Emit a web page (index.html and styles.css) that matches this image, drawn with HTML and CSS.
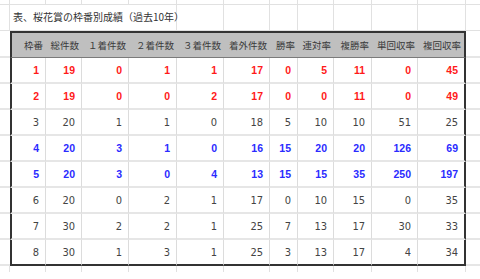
FILE: index.html
```html
<!DOCTYPE html>
<html lang="ja">
<head>
<meta charset="utf-8">
<title>桜花賞の枠番別成績</title>
<link rel="stylesheet" href="styles.css">
</head>
<body>
<table class="sheet">
  <colgroup>
    <col class="c0"><col class="c1"><col class="c2"><col class="c3"><col class="c4"><col class="c5"><col class="c6"><col class="c7"><col class="c8"><col class="c9"><col class="c10"><col class="c11"><col class="c12">
  </colgroup>
  <tr class="strip">
    <td></td><td></td><td></td><td></td><td></td><td></td><td></td><td></td><td></td><td></td><td></td><td></td><td></td>
  </tr>
  <tr class="title-row">
    <td class="g"></td>
    <td class="g title" colspan="4">表、桜花賞の枠番別成績（過去10年）</td>
    <td class="g"></td><td class="g"></td><td class="g"></td><td class="g"></td><td class="g"></td><td class="g"></td><td class="g"></td>
    <td class="g last"></td>
  </tr>
  <tr class="head">
    <td class="m"></td>
    <th class="first">枠番</th><th>総件数</th><th>１着件数</th><th>２着件数</th><th>３着件数</th><th>着外件数</th><th>勝率</th><th>連対率</th><th>複勝率</th><th>単回収率</th><th class="end">複回収率</th>
    <td class="m"></td>
  </tr>
  <tr class="row red">
    <td class="m"></td>
    <td class="first">1</td><td>19</td><td>0</td><td>1</td><td>1</td><td>17</td><td>0</td><td>5</td><td>11</td><td>0</td><td class="end">45</td>
    <td class="m"></td>
  </tr>
  <tr class="row red">
    <td class="m"></td>
    <td class="first">2</td><td>19</td><td>0</td><td>0</td><td>2</td><td>17</td><td>0</td><td>0</td><td>11</td><td>0</td><td class="end">49</td>
    <td class="m"></td>
  </tr>
  <tr class="row">
    <td class="m"></td>
    <td class="first">3</td><td>20</td><td>1</td><td>1</td><td>0</td><td>18</td><td>5</td><td>10</td><td>10</td><td>51</td><td class="end">25</td>
    <td class="m"></td>
  </tr>
  <tr class="row blue">
    <td class="m"></td>
    <td class="first">4</td><td>20</td><td>3</td><td>1</td><td>0</td><td>16</td><td>15</td><td>20</td><td>20</td><td>126</td><td class="end">69</td>
    <td class="m"></td>
  </tr>
  <tr class="row blue">
    <td class="m"></td>
    <td class="first">5</td><td>20</td><td>3</td><td>0</td><td>4</td><td>13</td><td>15</td><td>15</td><td>35</td><td>250</td><td class="end">197</td>
    <td class="m"></td>
  </tr>
  <tr class="row">
    <td class="m"></td>
    <td class="first">6</td><td>20</td><td>0</td><td>2</td><td>1</td><td>17</td><td>0</td><td>10</td><td>15</td><td>0</td><td class="end">35</td>
    <td class="m"></td>
  </tr>
  <tr class="row">
    <td class="m"></td>
    <td class="first">7</td><td>30</td><td>2</td><td>2</td><td>1</td><td>25</td><td>7</td><td>13</td><td>17</td><td>30</td><td class="end">33</td>
    <td class="m"></td>
  </tr>
  <tr class="row lastrow">
    <td class="m"></td>
    <td class="first">8</td><td>30</td><td>1</td><td>3</td><td>1</td><td>25</td><td>3</td><td>13</td><td>17</td><td>4</td><td class="end">34</td>
    <td class="m"></td>
  </tr>
  <tr class="strip bottom">
    <td></td><td></td><td></td><td></td><td></td><td></td><td></td><td></td><td></td><td></td><td></td><td></td><td></td>
  </tr>
</table>
</body>
</html>
```
FILE: styles.css
```css
html, body {
  margin: 0;
  padding: 0;
  background: #ffffff;
}

.sheet {
  table-layout: fixed;
  width: 480px;
  border-collapse: separate;
  border-spacing: 0;
  font-family: "Liberation Sans", Arial, sans-serif;
  color: #404040;
}

.c0 { width: 10px; }
.c1 { width: 36px; }
.c2 { width: 36px; }
.c3 { width: 47px; }
.c4 { width: 48px; }
.c5 { width: 47px; }
.c6 { width: 46px; }
.c7 { width: 28px; }
.c8 { width: 36px; }
.c9 { width: 38px; }
.c10 { width: 46px; }
.c11 { width: 48px; }
.c12 { width: 14px; }

td, th {
  padding: 0;
  margin: 0;
}

/* thin strip of grid at top and bottom */
.strip {
  height: 5px;
}
.strip td {
  border-right: 1px solid #e1e1e1;
  border-bottom: 1px solid #e1e1e1;
  line-height: 0;
  font-size: 0;
}
.strip td:last-child {
  border-right: 0;
}
.strip.bottom {
  height: 6px;
}
.strip.bottom td {
  border-bottom: 0;
}

/* title row */
.title-row {
  height: 26px;
}
.title-row .g {
  border-right: 1px solid #e1e1e1;
  border-bottom: 1px solid #e1e1e1;
}
.title-row .last {
  border-right: 0;
}
.title {
  font-family: "Noto Sans CJK JP", "Liberation Sans", sans-serif;
  font-size: 10px;
  color: #333333;
  padding-left: 3px;
  white-space: nowrap;
  vertical-align: middle;
  padding-bottom: 2px;
}

/* margin cells beside the table */
.m {
  border-bottom: 2px solid #e6e6e6;
}

/* header */
.head {
  height: 27px;
}
.head th {
  background: #bfbfbf;
  border-top: 2px solid #333333;
  border-bottom: 1px solid #7a7a7a;
  font-family: "Noto Sans CJK JP", sans-serif;
  font-weight: normal;
  font-size: 9.5px;
  color: #3a3a3a;
  text-align: right;
  padding-right: 3px;
  white-space: nowrap;
  vertical-align: middle;
}
.head th.first {
  border-left: 2px solid #333333;
}
.head th.end {
  border-right: 2px solid #333333;
}

/* body rows */
.row {
  height: 26px;
}
.row td {
  font-family: "Liberation Sans Narrow", "DejaVu Sans Condensed", "Liberation Sans", sans-serif;
  font-size: 11px;
  text-align: right;
  padding-right: 6px;
  vertical-align: middle;
  border-right: 1px solid #dcdcdc;
  border-bottom: 2px solid #e6e6e6;
  color: #444444;
}
.row td.m {
  padding: 0;
  border-right: 0;
}
.row td.first {
  border-left: 2px solid #333333;
}
.row td.end {
  border-right: 2px solid #333333;
}
.row.lastrow td:not(.m) {
  border-bottom: 2px solid #333333;
}

.red td:not(.m) {
  color: #ff1a1a;
  font-family: "Liberation Sans", Arial, sans-serif;
  font-weight: bold;
  font-size: 10.5px;
}
.blue td:not(.m) {
  color: #2b2bff;
  font-family: "Liberation Sans", Arial, sans-serif;
  font-weight: bold;
  font-size: 10.5px;
}
```
